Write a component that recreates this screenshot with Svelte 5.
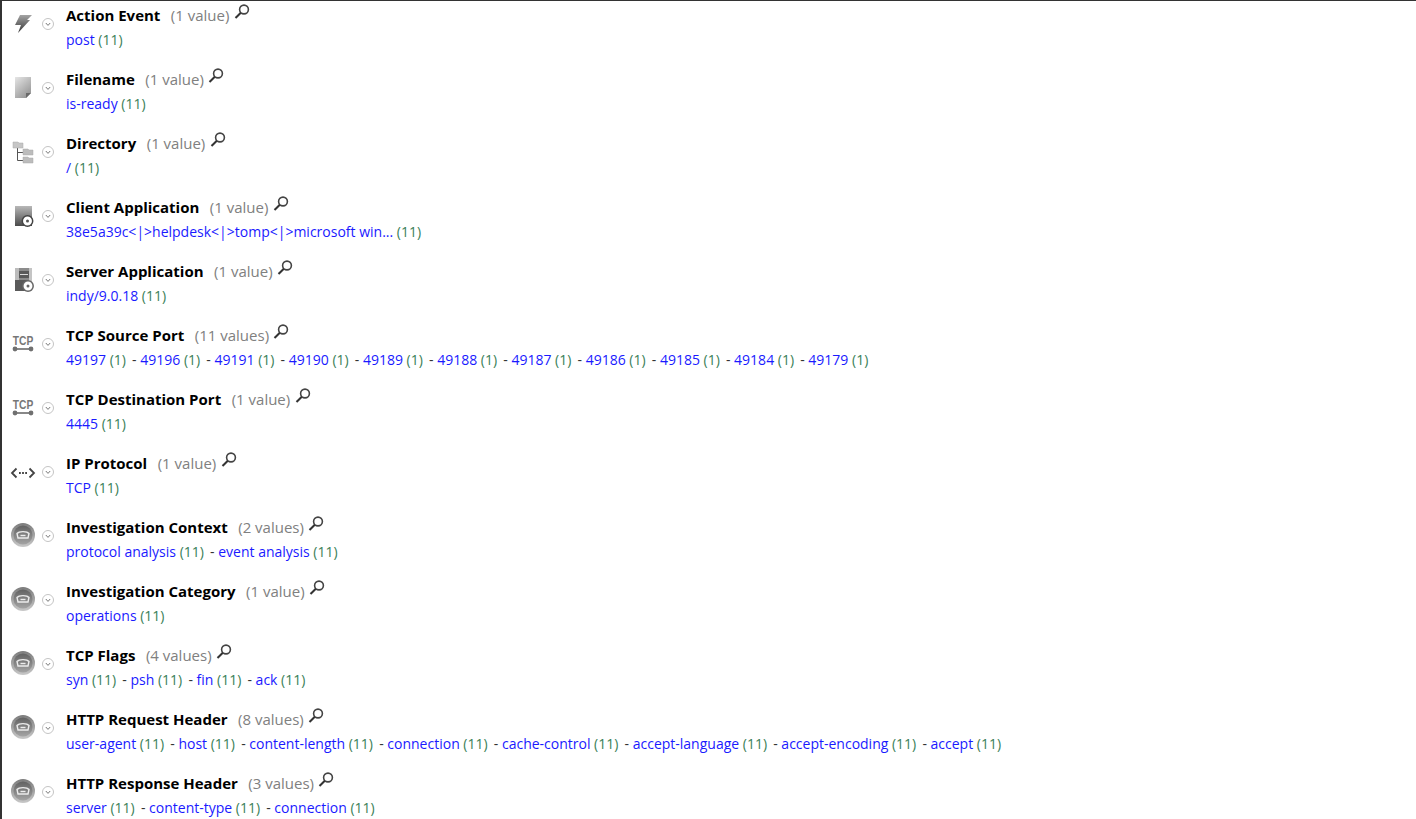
<script>
  const rows = [
    { icon: 'bolt', name: 'Action Event', total: '1 value', values: [['post', 11]] },
    { icon: 'file', name: 'Filename', total: '1 value', values: [['is-ready', 11]] },
    { icon: 'tree', name: 'Directory', total: '1 value', values: [['/', 11]] },
    { icon: 'client', name: 'Client Application', total: '1 value', values: [['38e5a39c<|>helpdesk<|>tomp<|>microsoft win...', 11]] },
    { icon: 'server', name: 'Server Application', total: '1 value', values: [['indy/9.0.18', 11]] },
    { icon: 'tcp', name: 'TCP Source Port', total: '11 values', values: [['49197', 1], ['49196', 1], ['49191', 1], ['49190', 1], ['49189', 1], ['49188', 1], ['49187', 1], ['49186', 1], ['49185', 1], ['49184', 1], ['49179', 1]] },
    { icon: 'tcp', name: 'TCP Destination Port', total: '1 value', values: [['4445', 11]] },
    { icon: 'proto', name: 'IP Protocol', total: '1 value', values: [['TCP', 11]] },
    { icon: 'disc', name: 'Investigation Context', total: '2 values', values: [['protocol analysis', 11], ['event analysis', 11]] },
    { icon: 'disc', name: 'Investigation Category', total: '1 value', values: [['operations', 11]] },
    { icon: 'disc', name: 'TCP Flags', total: '4 values', values: [['syn', 11], ['psh', 11], ['fin', 11], ['ack', 11]] },
    { icon: 'disc', name: 'HTTP Request Header', total: '8 values', values: [['user-agent', 11], ['host', 11], ['content-length', 11], ['connection', 11], ['cache-control', 11], ['accept-language', 11], ['accept-encoding', 11], ['accept', 11]] },
    { icon: 'disc', name: 'HTTP Response Header', total: '3 values', values: [['server', 11], ['content-type', 11], ['connection', 11]] }
  ];
</script>

<svg width="0" height="0" class="defs">
  <defs>
    <linearGradient id="grey" x1="0" y1="0" x2="0" y2="1">
      <stop offset="0" stop-color="#b8b8b8" />
      <stop offset="1" stop-color="#4a4a4a" />
    </linearGradient>
    <linearGradient id="paper" x1="0" y1="0" x2="0.7" y2="1">
      <stop offset="0" stop-color="#e6e6e6" />
      <stop offset="1" stop-color="#969696" />
    </linearGradient>
    <linearGradient id="bolt" x1="0" y1="0" x2="0" y2="1">
      <stop offset="0" stop-color="#a4a4a4" />
      <stop offset="1" stop-color="#333" />
    </linearGradient>
    <linearGradient id="ring" x1="0" y1="0" x2="0" y2="1">
      <stop offset="0" stop-color="#7c7c7c" />
      <stop offset="1" stop-color="#c8c8c8" />
    </linearGradient>
    <linearGradient id="ball" x1="0" y1="0" x2="0" y2="1">
      <stop offset="0" stop-color="#626262" />
      <stop offset="1" stop-color="#a4a4a4" />
    </linearGradient>
  </defs>
</svg>

<div class="page">
  {#each rows as row}
    <section class="row">
      <div class="icon">
        <svg width="24" height="24" viewBox="0 0 24 24">
          {#if row.icon === 'bolt'}
            <path d="M9 4h12l-5 5h3L7 22l3-8H4z" fill="url(#bolt)" />
          {:else if row.icon === 'file'}
            <path d="M4 2h16v16l-5 5H4z" fill="url(#paper)" />
            <path d="M20 18l-5 5v-5z" fill="#6a6a6a" />
          {:else if row.icon === 'tree'}
            <path d="M6.5 9v12.5h6M6.5 13.5h6" fill="none" stroke="#555" stroke-width="1" />
            <path d="M2 3h5l1 1h4v5H2z" fill="#c6c6c6" stroke="#aaa" stroke-width="0.5" />
            <path d="M12 10h5l1 1h4v5H12z" fill="#bcbcbc" stroke="#aaa" stroke-width="0.5" />
            <path d="M12 18h5l1 1h4v5H12z" fill="#bcbcbc" stroke="#aaa" stroke-width="0.5" />
          {:else if row.icon === 'client'}
            <rect x="4" y="3" width="17" height="20" fill="url(#grey)" />
            <circle cx="16.5" cy="18" r="5.2" fill="#fff" stroke="#444" stroke-width="1.5" />
            <circle cx="16.5" cy="18" r="1.5" fill="#555" />
          {:else if row.icon === 'server'}
            <rect x="4" y="1" width="17" height="23" fill="#8c8c8c" />
            <rect x="4" y="1" width="4" height="23" fill="#bcbcbc" />
            <rect x="18" y="1" width="3" height="23" fill="#c4c4c4" />
            <rect x="8" y="4" width="10" height="7" fill="#5a5a5a" />
            <rect x="9" y="7" width="8" height="1" fill="#ddd" />
            <rect x="4" y="13" width="13" height="11" fill="#5a5a5a" />
            <circle cx="17" cy="19" r="5.2" fill="#fff" stroke="#666" stroke-width="1.5" />
            <circle cx="17" cy="19" r="1.5" fill="#666" />
          {:else if row.icon === 'tcp'}
            <text x="0" y="14" transform="translate(12 0) scale(0.82 1)" text-anchor="middle" class="tcp">TCP</text>
            <rect x="3" y="17" width="18" height="2" fill="#888" />
            <circle cx="4" cy="18" r="2.4" fill="#707070" />
            <circle cx="20" cy="18" r="2.4" fill="#707070" />
          {:else if row.icon === 'proto'}
            <path d="M5.5 9.5L1 14l4.5 4.5M18.5 9.5L23 14l-4.5 4.5" fill="none" stroke="#444" stroke-width="1.8" />
            <path d="M8 14h1.8M11.1 14h1.8M14.2 14h1.8" stroke="#444" stroke-width="1.8" />
          {:else}
            <circle cx="12" cy="12" r="12" fill="url(#ring)" />
            <circle cx="12" cy="12" r="9.5" fill="url(#ball)" />
            <path d="M6 10.5c2-2.5 10-2.5 12 0l-1 4.5H7z" fill="none" stroke="#ececec" stroke-width="1.4" />
            <path d="M9.5 12.5h5" stroke="#ececec" stroke-width="1.4" />
          {/if}
        </svg>
      </div>
      <div class="toggle">
        <svg width="12" height="12" viewBox="0 0 12 12">
          <circle cx="6" cy="6" r="5.5" fill="#fff" stroke="#c4c4c4" />
          <path d="M3.8 5l2.2 2.4L8.2 5" fill="none" stroke="#777" stroke-width="1" />
        </svg>
      </div>
      <div class="body">
        <div class="head">
          <span class="name">{row.name}</span>
          <span class="total">({row.total})</span>
          <svg class="lens" width="16" height="16" viewBox="0 0 16 16">
            <circle cx="10" cy="6.5" r="4.4" fill="#fff" stroke="#444" stroke-width="1.6" />
            <path d="M6.8 9.7L1.5 15" stroke="#333" stroke-width="2" />
          </svg>
        </div>
        <div class="values">
          {#each row.values as [label, count], i}
            {#if i > 0}<span class="sep">-&nbsp;</span>{/if}<a href="#top">{label}</a>{' '}<span class="count">({count})</span>
          {/each}
        </div>
      </div>
    </section>
  {/each}
</div>

<style>
  :global(body) {
    background: #fff;
    font-family: "Open Sans", sans-serif;
    overflow: hidden;
  }
  .defs {
    position: absolute;
  }
  .page {
    height: 819px;
    box-sizing: border-box;
    overflow: hidden;
    border-top: 1px solid #333;
    border-left: 2px solid #333;
  }
  .row {
    display: flex;
    height: 64px;
  }
  .icon {
    width: 24px;
    margin-left: 9px;
    padding-top: 10px;
  }
  .icon svg {
    display: block;
    overflow: visible;
  }
  .toggle {
    width: 24px;
    margin-left: 7px;
    padding-top: 17px;
    box-sizing: border-box;
  }
  .toggle svg {
    display: block;
  }
  .body {
    flex: 1;
    font-size: 14px;
    line-height: 20px;
  }
  .head {
    display: flex;
    align-items: flex-start;
    height: 29px;
    padding-top: 4px;
    box-sizing: border-box;
  }
  .name {
    font-weight: 700;
    color: #000;
    font-size: 15px;
    margin-right: 10.5px;
  }
  .total {
    color: #808080;
    font-size: 15px;
  }
  .lens {
    margin: -2px 0 0 4.4px;
  }
  .values {
    white-space: nowrap;
  }
  a {
    color: #1a1aff;
    text-decoration: none;
  }
  .count {
    color: #3a8058;
  }
  .sep {
    color: #333;
    margin-left: 6.15px;
  }
  .tcp {
    font-family: "Liberation Sans", sans-serif;
    font-size: 12.5px;
    font-weight: 700;
    fill: #777;
  }
</style>
